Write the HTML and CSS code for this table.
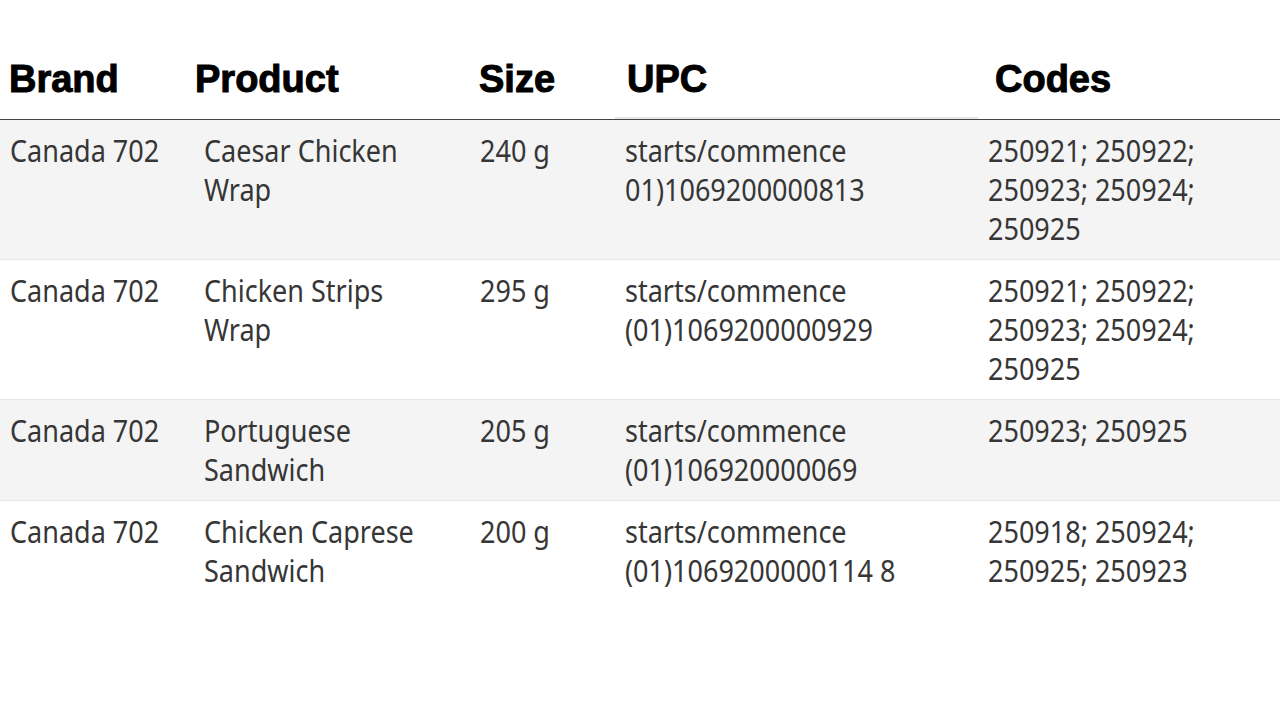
FILE: index.html
```html
<!DOCTYPE html>
<html lang="en">
<head>
<meta charset="utf-8">
<title>Recall table</title>
<link rel="stylesheet" href="styles.css">
</head>
<body>
<table class="recall">
  <colgroup>
    <col class="c-brand">
    <col class="c-product">
    <col class="c-size">
    <col class="c-upc">
    <col class="c-codes">
  </colgroup>
  <thead>
    <tr>
      <th class="h-brand">Brand</th>
      <th class="h-product">Product</th>
      <th class="h-size">Size</th>
      <th class="h-upc">UPC</th>
      <th class="h-codes">Codes</th>
    </tr>
  </thead>
  <tbody>
    <tr class="odd">
      <td><span class="cell">Canada 702</span></td>
      <td><span class="cell">Caesar Chicken Wrap</span></td>
      <td><span class="cell">240 g</span></td>
      <td><span class="cell">starts/commence 01)1069200000813</span></td>
      <td><span class="cell">250921; 250922; 250923; 250924; 250925</span></td>
    </tr>
    <tr>
      <td><span class="cell">Canada 702</span></td>
      <td><span class="cell">Chicken Strips Wrap</span></td>
      <td><span class="cell">295 g</span></td>
      <td><span class="cell">starts/commence (01)1069200000929</span></td>
      <td><span class="cell">250921; 250922; 250923; 250924; 250925</span></td>
    </tr>
    <tr class="odd">
      <td><span class="cell">Canada 702</span></td>
      <td><span class="cell">Portuguese Sandwich</span></td>
      <td><span class="cell">205 g</span></td>
      <td><span class="cell">starts/commence (01)106920000069</span></td>
      <td><span class="cell">250923; 250925</span></td>
    </tr>
    <tr class="last">
      <td><span class="cell">Canada 702</span></td>
      <td><span class="cell">Chicken Caprese Sandwich</span></td>
      <td><span class="cell">200 g</span></td>
      <td><span class="cell">starts/commence (01)1069200000114 8</span></td>
      <td><span class="cell">250918; 250924; 250925; 250923</span></td>
    </tr>
  </tbody>
</table>
</body>
</html>
```

FILE: styles.css
```css
html, body {
  margin: 0;
  padding: 0;
  background: #ffffff;
}

.recall {
  width: 1280px;
  table-layout: fixed;
  border-collapse: separate;
  border-spacing: 0;
  font-family: "Noto Sans", "Open Sans", sans-serif;
  color: #363636;
}

.c-brand { width: 194px; }
.c-product { width: 276px; }
.c-size { width: 145px; }
.c-upc { width: 363px; }
.c-codes { width: 302px; }

.recall th {
  font-family: "Liberation Sans", Arial, sans-serif;
  font-weight: 700;
  font-size: 38px;
  line-height: 42px;
  color: #000000;
  -webkit-text-stroke: 1px #000000;
  text-align: left;
  vertical-align: bottom;
  padding: 58px 0 19px 0;
  border-bottom: 1px solid #444444;
  white-space: nowrap;
}

.recall th.h-brand { padding-left: 9px; }
.recall th.h-product { padding-left: 1px; }
.recall th.h-size { padding-left: 9px; }
.recall th.h-upc {
  padding-left: 12px;
  box-shadow: inset 0 -2px 0 #e6e6e6;
}
.recall th.h-codes { padding-left: 17px; }

.recall td {
  font-size: 30px;
  line-height: 39px;
  vertical-align: top;
  padding: 11px 20px 11px 10px;
  border-bottom: 1px solid #e6e6e6;
  overflow: visible;
}

.cell {
  display: block;
  width: calc(100% / 0.9);
  transform: scaleX(0.9);
  transform-origin: left top;
}

.recall tr.odd td {
  background: #f4f4f4;
}

.recall tr.last td {
  border-bottom: none;
}
```
